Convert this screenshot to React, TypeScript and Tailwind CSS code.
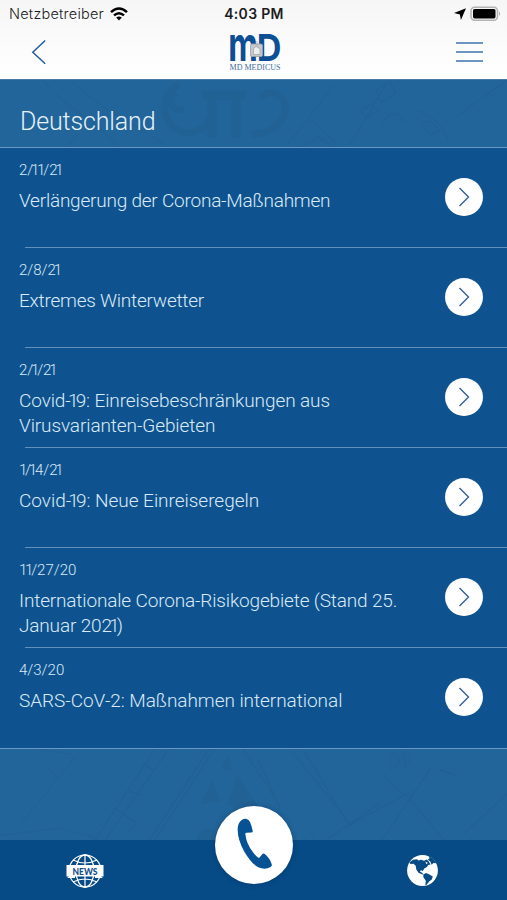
import React from 'react';

interface NewsItem {
  id: number;
  date: string;
  lines: string[];
  tracking: string;
}

const news: NewsItem[] = [
  { id: 1, date: '2/11/21', lines: ['Verlängerung der Corona-Maßnahmen'], tracking: 'tracking-[-0.22px]' },
  { id: 2, date: '2/8/21', lines: ['Extremes Winterwetter'], tracking: 'tracking-[-0.24px]' },
  {
    id: 3,
    date: '2/1/21',
    lines: ['Covid-19: Einreisebeschränkungen aus', 'Virusvarianten-Gebieten'],
    tracking: 'tracking-[-0.1px]',
  },
  { id: 4, date: '1/14/21', lines: ['Covid-19: Neue Einreiseregeln'], tracking: 'tracking-[-0.03px]' },
  {
    id: 5,
    date: '11/27/20',
    lines: ['Internationale Corona-Risikogebiete (Stand 25.', 'Januar 2021)'],
    tracking: 'tracking-[-0.16px]',
  },
  { id: 6, date: '4/3/20', lines: ['SARS-CoV-2: Maßnahmen international'], tracking: 'tracking-[-0.05px]' },
];

// The digit 1 is set narrow
const Figures: React.FC<{ text: string }> = ({ text }) => (
  <>
    {text.split(/(.?1+)/).map((part, i) =>
      part.endsWith('1') ? (
        <span key={i} className="tracking-[-0.15em]">
          {part}
        </span>
      ) : (
        part
      )
    )}
  </>
);

const StatusBar: React.FC = () => (
  <div className="grid h-7 grid-cols-3 items-center pl-[9px] pr-[6px] font-['Inter',sans-serif] text-[#1c1c1e]">
    <div className="flex items-center">
      <span className="text-[14.5px] leading-4 tracking-[0.22px]">Netzbetreiber</span>
      <svg className="ml-[6px] h-[14px] w-[18px]" viewBox="0 0 18 14" fill="none" stroke="#000" strokeWidth="2.5">
        <path d="M1 5.2Q9 -2.2 17 5.2" />
        <path d="M4 8.4Q9 4 14 8.4" />
        <path d="M6.2 10.6Q9 8.2 11.8 10.6L9 13.5Z" fill="#000" stroke="none" />
      </svg>
    </div>
    <span className="pr-[2px] text-center text-[14px] font-semibold leading-4 tracking-[0.3px]">4:03 PM</span>
    <div className="flex items-center justify-end">
      <svg className="mr-[4px] h-3 w-3" viewBox="0 0 12 12" fill="#000">
        <path d="M12 0.3L0 4.9L5.9 6.4L6.9 12Z" />
      </svg>
      <svg className="h-4 w-[31px]" viewBox="0 0 31 16">
        <rect x="1" y="1.2" width="26.5" height="13" rx="3.6" fill="#f7f7f7" stroke="#b4b4b4" strokeWidth="1.6" />
        <rect x="3" y="3" width="22.5" height="9.4" rx="1.6" fill="#000" />
        <path d="M29 5.2Q31 7.6 29 10Z" fill="#aaa" />
      </svg>
    </div>
  </div>
);

const Logo: React.FC = () => (
  <svg className="h-[42px] w-[56px] overflow-visible" viewBox="0 0 56 42">
    <g fill="#0d4f94" fontFamily="Inter, sans-serif" fontWeight="700">
      <text transform="translate(-0.8 27) scale(1.08 1.6)" fontSize="30">
        m
      </text>
      <text transform="translate(27.7 27) scale(1.12 1.2)" fontSize="30.5">
        D
      </text>
    </g>
    <rect x="21.5" y="10" width="12" height="12.5" rx="1.5" fill="#c6c8ca" stroke="#9aa1a8" strokeWidth="0.8" />
    <path d="M24.5 20.5V14.5L27 12.5L31 14.5V20.5ZM28 7V12" fill="#eceded" stroke="#a5a8ab" strokeWidth="0.8" />
    <text x="0.5" y="35.8" fill="#3f6da1" fontFamily="Liberation Serif, serif" fontSize="8" fontWeight="400" textLength="51" lengthAdjust="spacingAndGlyphs">
      MD MEDICUS
    </text>
  </svg>
);

const Header: React.FC = () => (
  <header className="h-20 border-b border-[#4779a3] bg-gradient-to-b from-[#f6f6f6] to-white">
    <StatusBar />
    <div className="grid h-[50px] grid-cols-3 items-center pl-[31px] pr-[24px]">
      <svg className="-mt-[3px] h-[26px] w-4" viewBox="0 0 16 26" fill="none" stroke="#215d99" strokeWidth="1.5">
        <path d="M14.2 1.5L1.8 13.3L14.2 24.8" />
      </svg>
      <div className="flex justify-center pt-[3px]">
        <Logo />
      </div>
      <div className="-mt-[2px] flex flex-col items-end gap-[7px]">
        <span className="h-[2px] w-[27px] bg-[#6c96bf]" />
        <span className="h-[2px] w-[27px] bg-[#6c96bf]" />
        <span className="h-[2px] w-[27px] bg-[#6c96bf]" />
      </div>
    </div>
  </header>
);

// Faint old sea chart ornaments above the list
const ChartTop: React.FC = () => (
  <svg className="absolute inset-0 h-full w-full" viewBox="0 0 507 67" fill="none" stroke="#245781" opacity="0.3">
    <path d="M43 0C60 20 75 30 91 41L120 67M70 0C100 30 130 40 163 64M66 67L78 54" />
    <path d="M180 5C158 12 158 48 188 53C202 50 210 46 208 38M184 30C172 31 166 20 176 13" strokeWidth="7" opacity="0.7" />
    <path d="M212 15V58M236 15V58M202 15H246" strokeWidth="9" opacity="0.6" />
    <path d="M260 18C269 7 286 14 285 30C284 44 270 54 252 54" strokeWidth="7" opacity="0.7" />
    <path d="M335 4L288 64M386 4L350 65M311 40L337 64M302 67L318 57L334 67" />
    <path d="M361 30L372 24L378 31L366 38ZM376 10L390 2L396 14L381 22Z" />
    <path d="M382 44C390 30 399 31 404 43M420 43L431 55L440 50L430 41ZM414 29C430 34 446 46 448 62M507 0L455 38" />
  </svg>
);

// Compass rose and bearing lines below the list
const ChartBottom: React.FC = () => (
  <svg className="absolute inset-0 h-full w-full" viewBox="0 0 507 91" fill="none" stroke="#245781" opacity="0.36">
    <path d="M20 76L75 8M57 28L48 18M72 5L40 0M0 86L60 79L98 89" opacity="0.6" />
    <path d="M155 0L95 91M169 0L105 91M209 0L149 91M214 0L155 91M143 15L153 21M128 41L140 46M118 61L136 74L126 84" />
    <path d="M243 0L279 55M258 10L280 59M290 0L353 78M303 0L349 76M349 76L410 43M326 91L380 54" />
    <path d="M212 33L201 55L220 51ZM237 27L228 56L257 56Z" fill="#245781" opacity="0.65" />
    <path d="M197 91C197 77 218 75 220 91ZM224 13L229 8L231 22L223 19Z" fill="#245781" opacity="0.5" />
    <path d="M391 5C386 18 396 24 399 14C400 7 395 4 391 5M404 3C412 0 412 17 405 17ZM318 77L323 73M309 82L317 91" opacity="0.6" />
    <path d="M384 25C391 36 400 42 408 48M410 50L444 91M430 20L382 91M438 20L458 27M507 45L462 86" />
  </svg>
);

const NewsRow: React.FC<{ item: NewsItem; last: boolean }> = ({ item, last }) => (
  <li className="flex h-[100.1px] flex-col">
    <div className="flex flex-1 items-start justify-between pl-[19px] pr-6">
      <div className="pt-3 text-[#dceaf6]">
        <p className="text-[15px] leading-5">
          <Figures text={item.date} />
        </p>
        <h2 className={`mt-2 text-[19px] leading-[25px] ${item.tracking}`}>
          {item.lines.map((line) => (
            <span key={line} className="block whitespace-nowrap">
              <Figures text={line} />
            </span>
          ))}
        </h2>
      </div>
      <button className="mt-[30px] flex h-[38px] w-[38px] items-center justify-center rounded-full bg-white">
        <svg className="h-5 w-3" viewBox="0 0 12 20" fill="none" stroke="#2d639a" strokeWidth="1.4">
          <path d="M1.5 1L10.5 10L1.5 19" />
        </svg>
      </button>
    </div>
    <div className={last ? 'h-px bg-[#6998c2]' : 'ml-[25px] h-px bg-[#6290bb]'} />
  </li>
);

const NewsGlobe: React.FC = () => (
  <svg className="h-[36px] w-[40px]" viewBox="0 0 40 36" fill="none" stroke="#fff">
    <circle cx="20" cy="18" r="16" strokeWidth="1.2" />
    <ellipse cx="20" cy="18" rx="9" ry="16" strokeWidth="1.3" />
    <path d="M20 1V35M8 7Q20 13 32 7M8 29Q20 23 32 29" strokeWidth="1.2" />
    <path d="M1.5 12H38.5V23.5H36L38 25H30V23.5H10V25H2L4 23.5H1.5Z" fill="#fff" stroke="none" />
    <text x="7.5" y="21.6" fill="#174f87" stroke="none" fontFamily="Lato, sans-serif" fontWeight="900" fontSize="9.5" textLength="25" lengthAdjust="spacingAndGlyphs">
      NEWS
    </text>
  </svg>
);

const Globe: React.FC = () => (
  <svg className="h-[31px] w-[31px]" viewBox="0 0 31 31">
    <circle cx="15.5" cy="15.5" r="15.4" fill="#fff" />
    <g fill="#064a86">
      <path d="M2.3 7.5L6 4.8L10 4.3L11.5 5.5L14 4.8L17 5.8L19.8 4.5L21.8 6.5L23.5 9.5L21 10L20 12L17.5 13.2L15.8 16L14 15.2L12.8 16.4L15 17.8L16.3 19.2L15.3 19.6L11.5 17.8L9.3 14.4L8.7 10.8L6.5 8.8L3.5 9Z" />
      <path d="M16.3 19.5L19 18L22 19.3L25.8 21.5L24.8 24.4L22.4 26.3L19.6 29.8L18.3 30.3L18.8 25.8L16.4 22.3Z" />
      <path d="M21.5 0.8L25.6 3.4L29.6 8.3L26.4 8L24.6 9.8L23.3 6.6L20.8 4.8L22.6 3.3Z" />
    </g>
    <path d="M12.5 2.6L18 1.6L19.5 3.3L15 4.6ZM18.5 6.5L21 8L19.2 9Z" fill="#fff" />
  </svg>
);

const App: React.FC = () => {
  return (
    <div className="flex h-[900px] w-[507px] flex-col overflow-hidden bg-[#21659a] font-['Roboto',sans-serif] font-light">
      <Header />

      <div className="relative flex h-[68px] items-center border-b border-[#6998c2] pl-5">
        <ChartTop />
        <h1 className="relative pt-[17px] text-[25px] leading-8 tracking-[-0.15px] text-[#e6f1fa]">Deutschland</h1>
      </div>

      <ul className="bg-[#0e538f]">
        {news.map((item, index) => (
          <NewsRow key={item.id} item={item} last={index === news.length - 1} />
        ))}
      </ul>

      <div className="relative flex-1">
        <ChartBottom />
      </div>

      <footer className="grid h-[60px] shrink-0 grid-cols-3 items-center bg-[#064a86]">
        <button className="flex justify-center pt-px">
          <NewsGlobe />
        </button>
        <button className="relative -mt-[50px] flex h-[78px] w-[78px] items-center justify-center justify-self-center rounded-full bg-white shadow-[0_0_5px_rgba(0,30,70,0.35)]">
          <svg className="h-[52px] w-[38px] overflow-visible" viewBox="0 0 38 52" fill="#075294">
            <path d="M2.7 9.3Q3.2 3.5 6.7 1Q8.8 -0.5 11 -0.3Q14 0.4 15 3Q16.8 7 17.8 12.2Q17.9 13.3 16.5 13.4L11.5 13.7Q10.2 13.8 10.4 15.2Q11.3 24.5 17.7 32.7Q20.3 36.6 23 38.5Q24 39.2 24.8 38.2L27 35.4Q28.3 34 29.8 35Q35 39.3 36.8 45.4Q37.2 47 35.6 48Q30 51.3 23.3 48.3C18 45.5 13.3 39.5 9.5 33Q2.2 20 2.7 9.3Z" />
          </svg>
        </button>
        <button className="flex justify-center pt-px">
          <Globe />
        </button>
      </footer>
    </div>
  );
};

export default App;
